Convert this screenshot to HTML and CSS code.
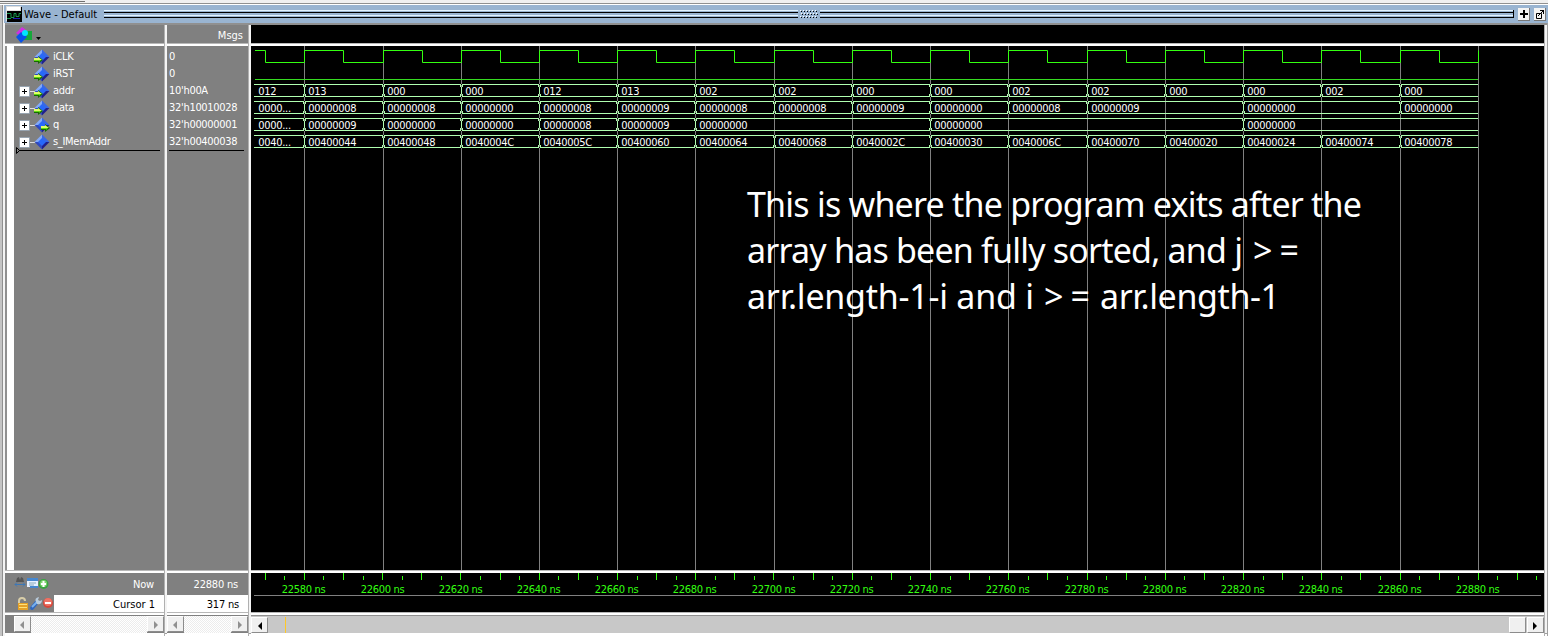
FILE: index.html
```
<!DOCTYPE html>
<html lang="en">
<head>
<meta charset="utf-8">
<title>Wave - Default</title>
<link rel="stylesheet" href="styles.css">
</head>
<body>
<svg class="symbols" width="0" height="0">
  <symbol id="gem" viewBox="0 0 16 16">
    <path d="M8 .5L.5 8H8z" fill="#83a9f8"/><path d="M8 .5L15.500 8H8z" fill="#3968e4"/>
    <path d="M.5 8L8 15.500V8z" fill="#3049bd"/><path d="M15.500 8L8 15.500V8z" fill="#20208c"/>
    <path d="M8 4l4 4-4 4-4-4z" fill="#2868fa"/>
  </symbol>
  <symbol id="arrow" viewBox="0 0 9 8"><path d="M0 2h4V0l5 4-5 4V6H0z" fill="#176b00"/><path d="M0 2h4V1l4 3H0z" fill="#e0ff68"/><path d="M0 4h7L5 6V5H0z" fill="#60db10"/></symbol>
  <symbol id="plus" viewBox="0 0 11 11"><rect width="11" height="11" rx="1" fill="#98a4b0"/><rect x="1" y="1" width="9" height="9" fill="#fff"/><path d="M3 5h5v1H3zM5 3h1v5H5z" fill="#000"/></symbol>
</svg>
<div class="window">
  <div class="topedge"></div>
  <header class="titlebar">
    <svg class="app" width="16" height="16"><path fill="#ddd" d="M0 0h15v15H0z"/><path fill="#fff" d="M1 1h13v3H1z"/><path fill="#000" d="M1 5h14v10H1zM15 1h1v15H1v-1h14z"/><path d="M1 7.500h4v4h3v-4h2v3h3v-3h2M1 12.500h4" fill="none" stroke="#189850"/><path d="M7 12.500h7" stroke="#2020b0"/></svg>
    <span class="title">Wave - Default</span>
    <div class="rails"></div>
    <svg class="dots" width="22" height="10"><g id="grip"></g></svg>
    <div class="rails end"></div>
    <svg class="tool" width="12" height="13"><path d="M0 0h12v13H0z" fill="#f4f4f4"/><path d="M11 0h1v13H0v-1h11z" fill="#777"/><path d="M2 5h8v2H2zM5 2h2v8H5z"/></svg>
    <svg class="tool last" width="12" height="13"><path d="M0 0h12v13H0z" fill="#f4f4f4"/><path d="M11 0h1v13H0v-1h11z" fill="#777"/><path d="M2.500 5.500h5v5h-5zM4 8l5-5" fill="none" stroke="#000"/><path d="M6 2h4v4H9V4L8 3H6z"/></svg>
  </header>
  <main class="panes">
    <section class="names">
      <div class="head">
        <svg width="42" height="18" viewBox="-1 0 42 18"><path d="M10 8l6-6 4 3-6 6z" fill="#d030e0"/><path d="M19 6h7v9h-8z" fill="#16a83a"/><path d="M10 12l5-5 6 5-6 6z" fill="#0852e8"/><circle cx="19" cy="8" r="3" fill="#00e5ff"/><path d="M30 12h5l-2.500 3z"/></svg>
      </div>
      <div class="list">
        <div class="gutter"></div>
        <div class="signals">
          <div class="sig"><svg width="38" height="17"><use href="#gem" x="19" y="2" width="16" height="16"/><use href="#arrow" x="19" y="9" width="9" height="8"/></svg>iCLK</div>
          <div class="sig"><svg width="38" height="17"><use href="#gem" x="19" y="2" width="16" height="16"/><use href="#arrow" x="19" y="9" width="9" height="8"/></svg>iRST</div>
          <div class="sig"><svg width="38" height="17"><path d="M15 10h6v1h-6z" fill="#ddd"/><use href="#plus" x="4" y="5" width="11" height="11"/><use href="#gem" x="19" y="2" width="16" height="16"/><use href="#arrow" x="19" y="9" width="9" height="8"/></svg>addr</div>
          <div class="sig"><svg width="38" height="17"><path d="M15 10h6v1h-6z" fill="#ddd"/><use href="#plus" x="4" y="5" width="11" height="11"/><use href="#gem" x="19" y="2" width="16" height="16"/><use href="#arrow" x="19" y="9" width="9" height="8"/></svg>data</div>
          <div class="sig"><svg width="38" height="17"><path d="M15 10h6v1h-6z" fill="#ddd"/><use href="#plus" x="4" y="5" width="11" height="11"/><use href="#gem" x="19" y="2" width="16" height="16"/><use href="#arrow" x="26" y="9" width="9" height="8"/></svg>q</div>
          <div class="sig"><svg width="38" height="17"><path d="M15 10h6v1h-6z" fill="#ddd"/><use href="#plus" x="4" y="5" width="11" height="11"/><use href="#gem" x="19" y="2" width="16" height="16"/></svg>s_IMemAddr</div>
          <svg class="marker" width="148" height="8"><path d="M2.500 .5v6l3-3z" fill="none" stroke="#000"/><path d="M5 3h141v1H5z"/></svg>
        </div>
      </div>
      <div class="foot">
        <div class="now"><svg width="45" height="20" viewBox="-2 0 45 20"><path d="M9 9l1-4 2-1 1 3 1-3 2 1 1 4z" fill="#555"/><path d="M8 11.500h10M10 9.500l-2 2 2 2M16 9.500l2 2-2 2" fill="none" stroke="#3d77b6"/><path d="M20 5h11v9H20z" fill="#e8f0ff"/><path d="M20 5h11v3H20zM23 13h8v2h-8z" fill="#4788d0"/><path d="M22 10h7M22 12h5" stroke="#8ab"/><circle cx="36.500" cy="11" r="5" fill="#38a440"/><circle cx="36.500" cy="10.500" r="3.500" fill="#80d570"/><path d="M34 10h5v2h-5zM35.500 8h2v6h-2z" fill="#fff"/></svg><span>Now</span></div>
        <div class="cursor"><svg width="49" height="17" viewBox="-2 0 49 17"><path d="M12 9V6q0-3 3-3t3 3" fill="none" stroke="#d8cda8" stroke-width="2"/><path d="M11 8h10v7H11z" fill="#e5a128"/><path d="M12 9h8v1h-8zM12 12h8v1h-8z" fill="#ffe078"/><path d="M25 13l5-6" stroke="#3268bd" stroke-width="4" stroke-linecap="round"/><path d="M25 12l5-5" stroke="#78b0ee" stroke-width="2"/><path d="M29 7q-2-4 3-5l-1 3 2 1 2-1q0 5-5 4z" fill="#b8cbdc"/><circle cx="41" cy="8" r="5" fill="#d5473a"/><circle cx="41" cy="7" r="4" fill="#ec7366"/><path d="M38 7h6v2h-6z" fill="#fff"/></svg><span>Cursor 1</span></div>
      </div>
      <div class="scroll inset"><i class="btn"><svg width="16" height="16"><path d="M9 4v8L5 8z" fill="#909090"/></svg></i><b></b><i class="btn"><svg width="16" height="16"><path d="M6 4v8l4-4z" fill="#909090"/></svg></i></div>
    </section>
    <section class="values">
      <div class="head"><span>Msgs</span></div>
      <div class="list">
        <div class="vals"><div>0</div><div>0</div><div>10'h00A</div><div>32'h10010028</div><div>32'h00000001</div><div>32'h00400038</div><hr></div>
      </div>
      <div class="foot"><div class="now"><span>22880 ns</span></div><div class="cursor"><span>317 ns</span></div></div>
      <div class="scroll"><i class="btn"><svg width="16" height="16"><path d="M9 4v8L5 8z" fill="#909090"/></svg></i><b></b><i class="btn"><svg width="16" height="16"><path d="M6 4v8l4-4z" fill="#909090"/></svg></i></div>
    </section>
    <section class="wave">
      <div class="head"></div>
      <div class="list"><svg id="plot" width="1293" height="524" viewBox="251 46 1293 524">
        <g id="traces"></g>
        <g class="note"><text x="747" y="217" textLength="615">This is where the program exits after the</text><text x="747" y="263" textLength="496">array has been fully sorted, and j</text><text x="1253" y="263" textLength="46">&gt;=</text><text x="747" y="309" textLength="287">arr.length-1-i and i</text><text x="1044" y="309" textLength="46">&gt;=</text><text x="1100" y="309" textLength="180">arr.length-1</text></g>
      </svg></div>
      <div class="foot"><svg id="axis" width="1293" height="39" viewBox="251 573 1293 39"></svg></div>
      <div class="scroll solid"><i class="btn"><svg width="16" height="16"><path d="M10 4v8L6 8z"/></svg></i><b></b><i class="btn thumb"></i><i class="btn"><svg width="16" height="16"><path d="M5 4v8l4-4z"/></svg></i></div>
    </section>
  </main>
</div>
<script src="wave.js"></script>
</body>
</html>
```
FILE: styles.css
```
* { box-sizing: border-box; }
body { margin: 0; background: #c4c4c4; font: 11px/17px "DejaVu Sans Condensed", "DejaVu Sans", sans-serif; font-stretch: condensed; letter-spacing: -.3px; overflow: hidden; }
svg { display: block; flex: none; }
.symbols { position: absolute; }
.window { width: 1548px; height: 636px; padding: 0 0 0 3px; background: linear-gradient(to right, #c4c4c4 0 2px, #909090 2px 3px, #f4f4f4 3px); display: flex; flex-direction: column; }
.topedge { height: 5px; margin-left: -3px; background: linear-gradient(#707070 0 0) 0 1px / 85px 1px no-repeat, linear-gradient(#f0f0f0 0 3px, #909090 3px 4px, #fff 4px); }
.titlebar { height: 18px; margin-left: 1px; background: #99b4d1; display: flex; align-items: center; padding-left: 2px; }
.title { margin-left: 2px; width: 76px; white-space: nowrap; letter-spacing: 0; }
.rails { width: 694px; margin-left: 4px; height: 8px; background: linear-gradient(#e3f4ff 0 1px, #99b4d1 1px 2px, #000 2px 3px, #99b4d1 3px 5px, #e3f4ff 5px 6px, #99b4d1 6px 7px, #000 7px); }
.rails.end { width: 694px; margin: 0; border-right: 1px solid #000; }
.tool { margin-left: 4px; }
.panes { height: 613px; margin-left: 2px; display: grid; grid-template-columns: 159px 81px 1293px; column-gap: 3px; padding-top: 2px; border-right: 1px solid #a0a0a0; background: linear-gradient(#909090 0 2px, transparent 2px 610px, #a0a0a0 610px 611px, #fff 611px); }
.names, .values, .wave { display: grid; grid-template-rows: 18px 524px 39px 18px; align-content: start; row-gap: 3px; background: linear-gradient(#b8b8b8 0 0) 0 18px / 100% 1px no-repeat, linear-gradient(#b8b8b8 0 0) 0 545px / 100% 1px no-repeat, linear-gradient(#b8b8b8 0 0) 0 587px / 100% 1px no-repeat, #fff; box-shadow: 1px 0 #b0b0b0; }
.head, .list, .foot { background: #808080; color: #fff; }
.names .list { display: flex; }
.gutter { width: 9px; background: #fff; border-left: 2px solid #909090; }
.signals { flex: 1; }
.sig { height: 17px; display: flex; padding-left: 1px; line-height: 21px; }
.sig svg { overflow: visible; margin-top: 1px; }
.marker { margin: -1px 0 0; overflow: visible; }
.values .head { padding-right: 5px; text-align: right; line-height: 21px; letter-spacing: 0; }
.vals { padding: 2px 4px 0 2px; }
.vals div { height: 17px; line-height: 18px; white-space: nowrap; }
hr { margin: 0; border: 0; height: 1px; background: #000; }
.now { height: 22px; display: flex; line-height: 23px; }
.now span { margin-left: auto; padding-right: 10px; letter-spacing: -.2px; }
.cursor { height: 17px; display: flex; }
.cursor span { flex: 1; background: #fff; color: #000; text-align: right; padding-right: 9px; line-height: 19px; letter-spacing: 0; }
.values .cursor span { letter-spacing: -.2px; }
.wave .head, .wave .list, .wave .foot { background: #000; }
.scroll { display: flex; background: #808080; padding-top: 1px; }
.scroll.inset { padding-left: 9px; }
.scroll b { flex: 1; background: repeating-conic-gradient(#fff 0 25%, #ececec 0 50%) 0 0 / 2px 2px; }
.btn { width: 17px; height: 16px; background: #f0f0f0; border: 1px solid; border-color: #fff #8c8c8c #8c8c8c #fff; overflow: hidden; }
.solid { background: #c8c8c8; border-top: 1px solid #909090; }
.solid b { background: linear-gradient(#ffc828 0 0) 17px 0 / 1px 100% no-repeat, #c8c8c8; }
.thumb { margin-right: 1px; }
#plot text { fill: #fff; }
#plot .note text { font: 34px "Noto Sans", "Open Sans", sans-serif; font-stretch: normal; letter-spacing: 0; }
#axis text { fill: #33ff10; text-anchor: middle; }
```
FILE: wave.js
```
const edges = [304, 383, 461, 539, 617, 695, 774, 852, 930, 1008, 1087, 1165, 1243, 1321, 1400, 1478];
const rect = (x, y, w, h, c) => `<rect x="${x}" y="${y}" width="${w}" height="${h}" fill="${c}"/>`;
const GREEN = '#33ff10', BUS = '#b0ffb0', GRID = '#808080';
const buses = [
  [84, ['012', '013', '000', '000', '012', '013', '002', '002', '000', '000', '002', '002', '000', '000', '002', '000']],
  [101, ['0000...', '00000008', '00000008', '00000000', '00000008', '00000009', '00000008', '00000008', '00000009', '00000000', '00000008', '00000009', '', '00000000', '', '00000000']],
  [118, ['0000...', '00000009', '00000000', '00000000', '00000008', '00000009', '00000000', '', '', '00000000', '', '', '', '00000000', '', '']],
  [135, ['0040...', '00400044', '00400048', '0040004C', '0040005C', '00400060', '00400064', '00400068', '0040002C', '00400030', '0040006C', '00400070', '00400020', '00400024', '00400074', '00400078']]
];
let out = edges.map(x => rect(x, 46, 1, 524, GRID)).join('');
let clk = 'M255 50.5H265.5V62.5';
edges.forEach((x, i) => {
  clk += `H${x + .5}V50.5`;
  if (i < edges.length - 1) clk += `H${Math.floor((x + edges[i + 1]) / 2) + .5}V62.5`;
});
out += `<path d="${clk}" fill="none" stroke="${GREEN}"/>` + rect(255, 79, 1223, 1, '#35dc20');
buses.forEach(([y, values]) => {
  out += rect(254, y, 1224, 1, BUS) + rect(254, y + 12, 1224, 1, BUS);
  values.forEach((v, i) => {
    if (!v) return;
    const x = i ? edges[i - 1] : 254;
    if (i) {
      out += rect(x, y, 1, 1, '#000') + rect(x, y + 12, 1, 1, '#000');
      out += rect(x - 1, y + 1, 1, 2, BUS) + rect(x + 1, y + 1, 1, 2, BUS) + rect(x, y + 3, 1, 7, BUS);
      out += rect(x - 1, y + 10, 1, 2, BUS) + rect(x + 1, y + 10, 1, 2, BUS);
    }
    out += `<text x="${x + 4.3}" y="${y + 11}">${v}</text>`;
  });
});
document.getElementById('traces').innerHTML = out;

let axis = rect(254, 595, 1287, 1, GRID);
for (let k = -2; k < 64; k++) {
  const x = Math.floor(304.4 + k * 19.565), major = k % 2 === 0;
  if (x < 1543) axis += rect(x, major ? 573 : 576, 1, major ? 7 : 4, GREEN);
}
edges.forEach((x, i) => { axis += `<text x="${x - .5}" y="593">${22580 + i * 20} ns</text>`; });
document.getElementById('axis').innerHTML = axis;

let grip = '';
for (let r = 0; r < 3; r++) for (let c = 0; c < 6; c++) {
  const x = 2 + c * 3 + (r % 2), y = 1 + r * 3;
  grip += rect(x, y, 1, 1, '#fff') + rect(x + 1, y + 1, 1, 1, '#000');
}
document.getElementById('grip').innerHTML = grip;
```
